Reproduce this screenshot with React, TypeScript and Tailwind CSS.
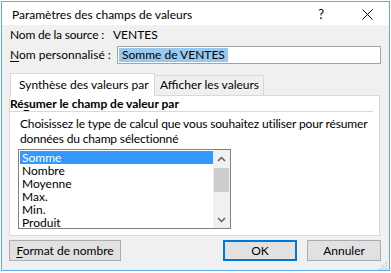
import React from 'react';

const font = { fontFamily: 'Lato, "Noto Sans", sans-serif' };

const items = ['Somme', 'Nombre', 'Moyenne', 'Max.', 'Min.', 'Produit'];

export default function App() {
  return (
    <div className="w-[391px] h-[273px] bg-white pt-[1px] pl-[1px] text-[12px] text-black whitespace-nowrap" style={font}>
      <div className="w-[389px] h-[270px] border border-[#5aaeee] bg-[#f0f0f0] flex flex-col">
        {/* TITLE BAR */}
        <div className="h-[23px] bg-white flex items-center pl-[10px] pr-[16px] shrink-0">
          <span className="leading-none pt-[3px]">Paramètres des champs de valeurs</span>
          <span className="ml-auto mr-[38px] text-[13px] leading-none pt-[2px]">?</span>
          <svg width="11" height="11" viewBox="0 0 11 11" className="mt-[2px]">
            <path d="M0.5 0.5 L10.5 10.5 M10.5 0.5 L0.5 10.5" stroke="#000" strokeWidth="1" />
          </svg>
        </div>

        {/* SOURCE */}
        <div className="flex items-center h-[16px] mt-[2px] pl-[8px] leading-[16px]">
          <span className="w-[103px] shrink-0 tracking-[-0.2px]">Nom de la source :</span>
          <span>VENTES</span>
        </div>

        {/* CUSTOM NAME */}
        <div className="flex items-center h-[18px] mt-[3px] pl-[8px]">
          <span className="w-[107px] shrink-0 leading-[16px]">
            <u className="underline-offset-2">N</u>om personnalisé :
          </span>
          <div className="w-[264px] h-[18px] border border-[#a5a5a5] bg-white flex items-center pl-[1px]">
            <span className="bg-[#99c9ef] h-[14px] leading-[14px] px-[3px]">Somme de VENTES</span>
          </div>
        </div>

        {/* TABS */}
        <div className="flex items-end h-[22px] mt-[9px] pl-[8px] relative z-10 shrink-0">
          <div className="h-[23px] w-[145px] border border-b-0 border-[#d9d9d9] bg-white pl-[8px] pt-[3px] leading-[16px] -mb-[1px]">
            Synthèse des valeurs par
          </div>
          <div className="h-[20px] w-[109px] border border-l-0 border-b-0 border-[#d9d9d9] bg-[#f0f0f0] pl-[5px] pt-[1px] leading-[16px]">
            Afficher les valeurs
          </div>
        </div>

        {/* PANEL */}
        <div className="ml-[7px] w-[371px] h-[141px] border border-[#d9d9d9] bg-white flex flex-col shrink-0">
          <div className="font-bold leading-[15px] pr-[6px]">
            Ré<u className="underline-offset-2">s</u>umer le champ de valeur par
          </div>
          <div className="h-px bg-[#d9d9d9] mr-[6px]" />
          <div className="pl-[10px] mt-[4px] leading-[15px] tracking-[-0.15px]">
            Choisissez le type de calcul que vous souhaitez utiliser pour résumer
            <br />
            données du champ sélectionné
          </div>
          <div className="ml-[8px] mt-[3px] w-[213px] h-[80px] border border-[#828282] flex shrink-0">
            <div className="flex-1 pl-[1px] pt-[1px]">
              {items.map((it, i) => (
                <div
                  key={it}
                  className={
                    i === 0
                      ? 'h-[13px] leading-[13px] pl-[2px] bg-[#3399ff] text-white'
                      : 'h-[13px] leading-[13px] pl-[2px]'
                  }
                >
                  {it}
                </div>
              ))}
            </div>
            <div className="w-[17px] bg-[#f0f0f0] flex flex-col items-center">
              <div className="h-[17px] flex items-center justify-center">
                <svg width="9" height="6" viewBox="0 0 9 6">
                  <path d="M1 5 L4.5 1.5 L8 5" fill="none" stroke="#606060" strokeWidth="1.5" />
                </svg>
              </div>
              <div className="w-[15px] h-[24px] bg-[#cdcdcd] mt-[1px]" />
              <div className="mt-auto h-[17px] flex items-center justify-center">
                <svg width="9" height="6" viewBox="0 0 9 6">
                  <path d="M1 1 L4.5 4.5 L8 1" fill="none" stroke="#606060" strokeWidth="1.5" />
                </svg>
              </div>
            </div>
          </div>
        </div>

        {/* BUTTONS */}
        <div className="flex items-center mt-[4px] pl-[7px] pr-[8px] shrink-0">
          <button className="w-[112px] h-[21px] border border-[#adadad] bg-[#e1e1e1] leading-[18px]">
            <u className="underline-offset-2">F</u>ormat de nombre
          </button>
          <button className="ml-auto w-[74px] h-[21px] border-2 border-[#0078d7] bg-[#e1e1e1] leading-[16px]">
            OK
          </button>
          <button className="ml-[10px] w-[74px] h-[21px] border border-[#adadad] bg-[#e1e1e1] leading-[18px]">
            Annuler
          </button>
        </div>

        {/* GRIP */}
        <div className="mt-auto flex justify-end pr-[1px] pb-[1px]">
          <svg width="10" height="10" viewBox="0 0 10 10">
            <path d="M9 1 L1 9 M9 4 L4 9 M9 7 L7 9" stroke="#a0a0a0" strokeWidth="1" strokeDasharray="1 1" />
          </svg>
        </div>
      </div>
    </div>
  );
}
